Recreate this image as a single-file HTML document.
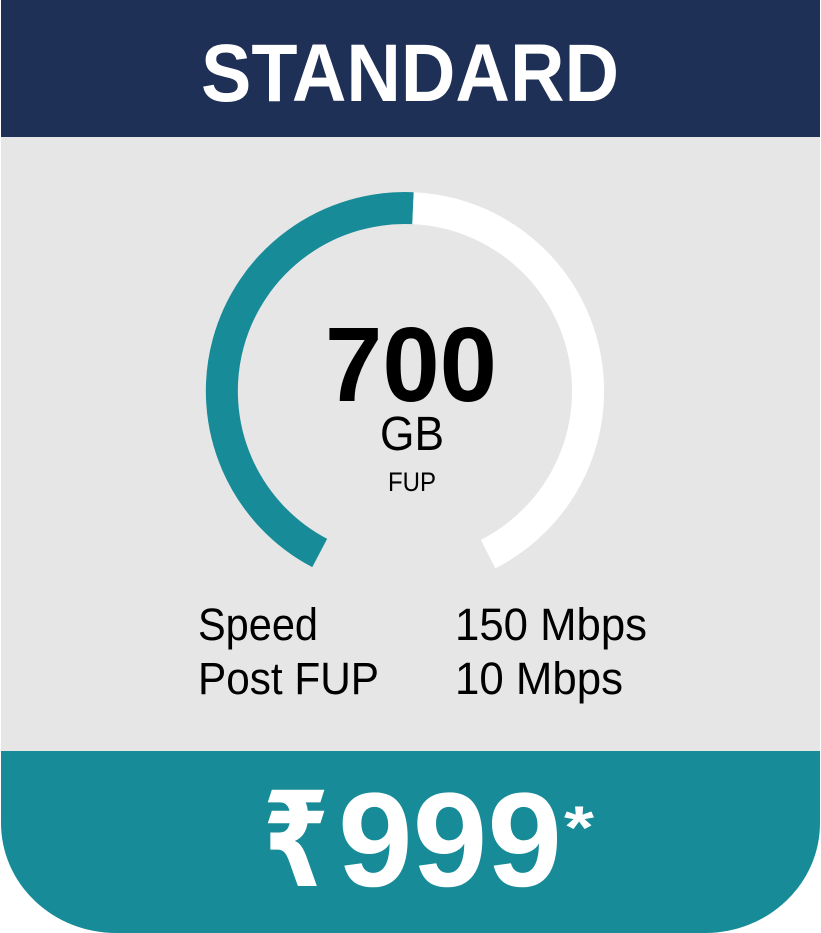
<!DOCTYPE html>
<html><head><meta charset="utf-8"><style>
html,body{margin:0;padding:0;background:#fff;}
svg{display:block}
text{font-family:"Liberation Sans","DejaVu Sans",sans-serif;}
</style></head><body>
<svg width="821" height="933" viewBox="0 0 821 933" xmlns="http://www.w3.org/2000/svg">
<path d="M1 0 H820 V823 A115 110 0 0 1 705 933 H116 A115 110 0 0 1 1 823 Z" fill="#178b98"/>
<rect x="1" y="137" width="819" height="614" fill="#e6e6e6"/>
<rect x="1" y="0" width="819" height="137" fill="#1f3057"/>
<text x="410" y="101" text-anchor="middle" font-size="82" font-weight="bold" fill="#fff" textLength="418" lengthAdjust="spacingAndGlyphs">STANDARD</text>
<path d="M413 208.2 A183 183 0 0 0 319.7 553" fill="none" stroke="#178b98" stroke-width="32"/>
<path d="M413 208.2 A183 183 0 0 1 488.1 554.1" fill="none" stroke="#fff" stroke-width="32"/>
<text x="411" y="401" text-anchor="middle" font-size="106" font-weight="bold" fill="#000" textLength="172" lengthAdjust="spacingAndGlyphs">700</text>
<text x="412" y="450" text-anchor="middle" font-size="48" fill="#000" textLength="64" lengthAdjust="spacingAndGlyphs">GB</text>
<text x="412" y="491" text-anchor="middle" font-size="27" fill="#000" textLength="48" lengthAdjust="spacingAndGlyphs">FUP</text>
<text x="198" y="640" font-size="45" fill="#000" textLength="120" lengthAdjust="spacingAndGlyphs">Speed</text>
<text x="198" y="694" font-size="45" fill="#000" textLength="181" lengthAdjust="spacingAndGlyphs">Post FUP</text>
<text x="455" y="640" font-size="45" fill="#000" textLength="192" lengthAdjust="spacingAndGlyphs">150 Mbps</text>
<text x="455" y="694" font-size="45" fill="#000" textLength="168" lengthAdjust="spacingAndGlyphs">10 Mbps</text>
<text x="263" y="886" font-size="132" font-weight="bold" fill="#fff" font-family="DejaVu Sans, sans-serif" textLength="66" lengthAdjust="spacingAndGlyphs">₹</text>
<text x="338" y="886" font-size="134" font-weight="bold" fill="#fff" textLength="224" lengthAdjust="spacingAndGlyphs">999</text>
<text x="564" y="848" font-size="60" font-weight="bold" fill="#fff" textLength="30" lengthAdjust="spacingAndGlyphs">*</text>
</svg>
</body></html>
